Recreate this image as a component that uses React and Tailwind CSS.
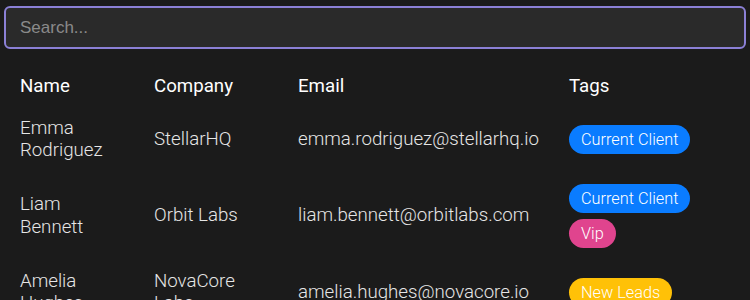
import React from 'react';

const contacts = [
  { name: 'Emma Rodriguez', company: 'StellarHQ', email: 'emma.rodriguez@stellarhq.io', tags: ['Current Client'] },
  { name: 'Liam Bennett', company: 'Orbit Labs', email: 'liam.bennett@orbitlabs.com', tags: ['Current Client', 'Vip'] },
  { name: 'Amelia Hughes', company: 'NovaCore Labs', email: 'amelia.hughes@novacore.io', tags: ['New Leads'] },
];

const tagStyles = {
  'Current Client': 'bg-[#0a7cff]',
  Vip: 'bg-[#e0448e]',
  'New Leads': 'bg-[#ffc107]',
};

const Tag = ({ label }) => (
  <span className={`inline-block rounded-full px-3 py-[3px] text-[16.3px] font-light leading-[23px] text-white ${tagStyles[label]}`}>
    {label}
  </span>
);

export default function App() {
  return (
    <div className="min-h-screen bg-[#1b1b1b] px-1 pt-[6px] font-['Roboto',sans-serif] text-[#e6e6e6]">
      <input
        type="text"
        placeholder="Search..."
        className="block h-[43px] w-full rounded-md border-2 border-[#8b80d6] bg-[#2a2a2a] px-[14px] font-['Liberation_Sans',Arial,sans-serif] text-[17px] text-white placeholder:text-[#8a8a8a] outline-none"
      />
      <table className="mt-[18px] w-full table-fixed border-collapse text-left text-[18.7px] leading-[22.5px]">
        <colgroup>
          <col className="w-[134px]" />
          <col className="w-[144px]" />
          <col className="w-[271px]" />
          <col />
        </colgroup>
        <thead>
          <tr>
            <th className="px-4 py-2 font-normal text-white">Name</th>
            <th className="px-4 py-2 font-normal text-white">Company</th>
            <th className="px-4 py-2 font-normal text-white">Email</th>
            <th className="px-4 py-2 font-normal text-white">Tags</th>
          </tr>
        </thead>
        <tbody>
          {contacts.map((c) => (
            <tr key={c.email}>
              <td className="px-4 py-[11px] font-light">{c.name}</td>
              <td className="px-4 py-[11px] font-light">{c.company}</td>
              <td className="px-4 py-[11px] font-light">{c.email}</td>
              <td className="px-4 py-[11px]">
                <div className="flex flex-col items-start gap-[6px]">
                  {c.tags.map((t) => (
                    <Tag key={t} label={t} />
                  ))}
                </div>
              </td>
            </tr>
          ))}
        </tbody>
      </table>
    </div>
  );
}
